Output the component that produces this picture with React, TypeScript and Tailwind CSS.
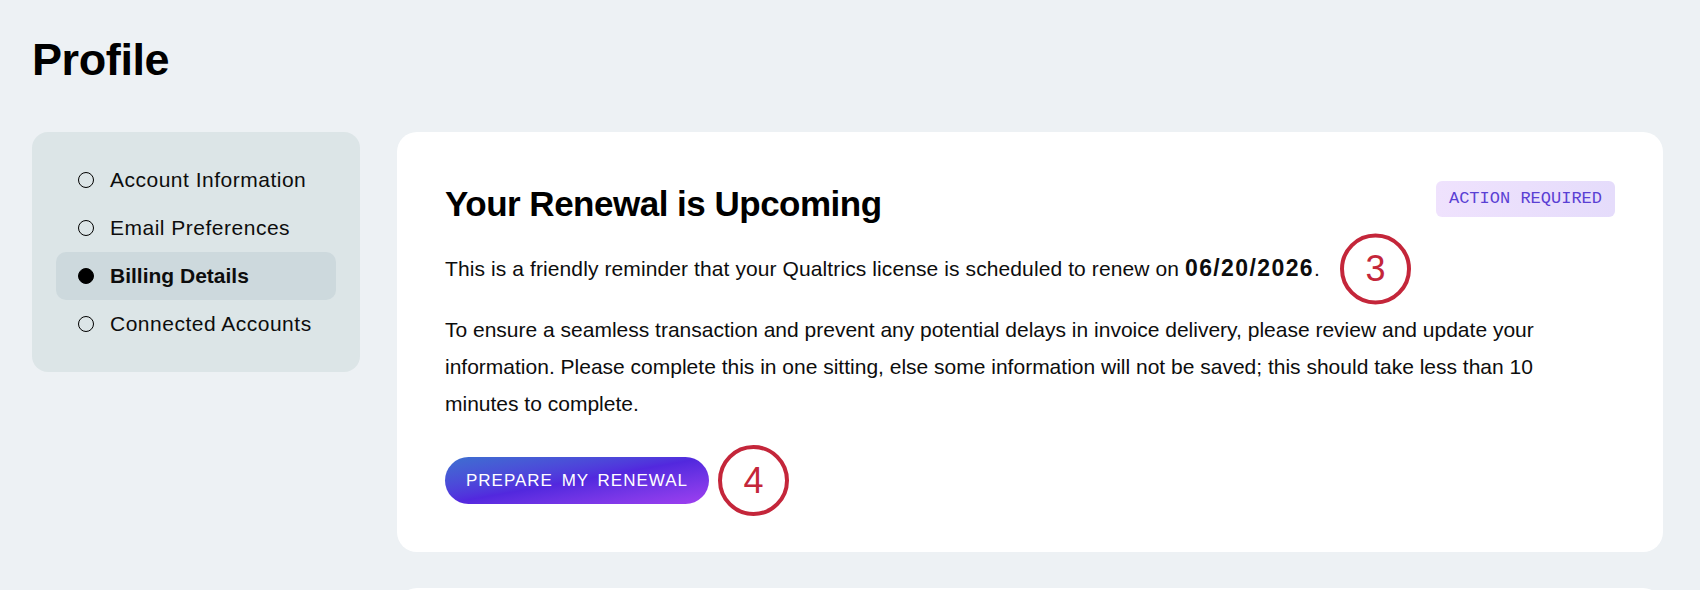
import React from 'react';

const navItems = [
  { label: 'Account Information', active: false },
  { label: 'Email Preferences', active: false },
  { label: 'Billing Details', active: true },
  { label: 'Connected Accounts', active: false },
];

// red annotation ring with a number in it
const Marker: React.FC<{ n: string }> = ({ n }) => (
  <span className="flex items-center justify-center w-[71px] h-[71px] rounded-full border-[4px] border-[#c4263a] bg-white text-[#c4263a] text-[36px] leading-none font-['Liberation_Sans',sans-serif] font-normal">
    {n}
  </span>
);

export default function App() {
  return (
    <div className="min-h-[590px] bg-[#edf1f4] pl-8 pr-[37px] pt-[33px] font-['Liberation_Sans',Arial,sans-serif] text-[#0d0d0d] overflow-hidden">
      <h1 className="text-[45px] leading-[53px] font-bold tracking-[-0.4px] text-black">Profile</h1>

      <div className="flex items-start gap-[37px] mt-[46px]">
        {/* Sidebar */}
        <nav className="w-[328px] shrink-0 rounded-2xl bg-[#dce5e7] p-6">
          {navItems.map((item) => (
            <div
              key={item.label}
              className={`flex items-center h-12 pl-[22px] rounded-[10px] ${item.active ? 'bg-[#cdd9dd]' : ''}`}
            >
              <span
                className={`w-4 h-4 rounded-full border-[1.5px] border-black ${item.active ? 'bg-black' : ''}`}
              />
              <span
                className={`ml-[16px] text-[21px] tracking-[0.5px] ${item.active ? 'font-bold tracking-[0px]' : ''}`}
              >
                {item.label}
              </span>
            </div>
          ))}
        </nav>

        {/* Main */}
        <div className="flex-1 flex flex-col gap-9">
          <div className="rounded-[20px] bg-white p-12">
            <div className="flex items-start justify-between">
              <h2 className="text-[35px] leading-[48px] font-bold tracking-[-0.5px] text-black">
                Your Renewal is Upcoming
              </h2>
              <span className="mt-px flex items-center h-[36px] px-[13px] rounded-md bg-gradient-to-r from-[#efe2fd] to-[#e5dcfb] text-[#5a3fd4] text-[17px] font-['Liberation_Mono',monospace]">
                ACTION REQUIRED
              </span>
            </div>

            <p className="mt-[22px] text-[21px] leading-[37px] tracking-[0.1px]">
              This is a friendly reminder that your Qualtrics license is scheduled to renew on{' '}
              <span className="font-bold text-[23px] tracking-[1.4px]">06/20/2026</span>
              <span className="relative">
                .
                <span className="absolute left-[26px] top-1/2 -translate-y-1/2">
                  <Marker n="3" />
                </span>
              </span>
            </p>

            <p className="mt-6 text-[21px] leading-[37px] max-w-[1140px]">
              To ensure a seamless transaction and prevent any potential delays in invoice delivery, please review and update your information. Please complete this in one sitting, else some information will not be saved; this should take less than 10 minutes to complete.
            </p>

            <div className="mt-[35px] flex items-center gap-[9px] h-[47px]">
              <button className="h-[47px] w-[264px] rounded-full bg-gradient-to-br from-[#3d6fd0] via-[#5228de] to-[#a03ff0] text-white text-[17px] tracking-[1px] [word-spacing:3px]">
                PREPARE MY RENEWAL
              </button>
              <Marker n="4" />
            </div>
          </div>

          <div className="rounded-[20px] bg-white h-[200px]" />
        </div>
      </div>
    </div>
  );
}
